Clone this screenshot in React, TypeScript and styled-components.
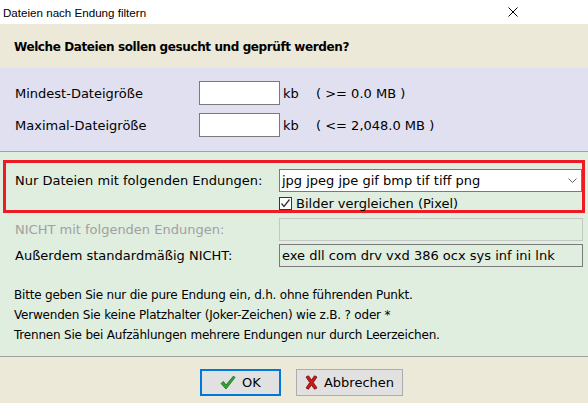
import React from "react";
import styled, { createGlobalStyle } from "styled-components";

const Global = createGlobalStyle`
  html, body { margin: 0; padding: 0; background: #ECE9D8; }
  * { box-sizing: border-box; }
`;

const Window = styled.div`
  width: 588px;
  height: 403px;
  display: flex;
  flex-direction: column;
  background: #ECE9D8;
  font-family: "DejaVu Sans", Verdana, sans-serif;
  font-size: 13px;
  color: #000;
  overflow: hidden;
`;

const TitleBar = styled.div`
  height: 24px;
  flex: none;
  background: #fff;
  display: flex;
  align-items: center;
  justify-content: space-between;
  padding: 0 70px 0 3px;
  font-family: "Liberation Sans", Arial, sans-serif;
  font-size: 11.6px;
`;

const CloseIcon = styled.svg`
  width: 10px;
  height: 10px;
`;

const Header = styled.div`
  height: 44px;
  flex: none;
  display: flex;
  align-items: center;
  padding: 2px 0 0 14px;
  font-weight: bold;
  font-size: 12px;
  letter-spacing: -0.4px;
`;

const SizeSection = styled.section`
  height: 84px;
  flex: none;
  background: #E1E0F0;
  border-bottom: 1px solid #A0A0A0;
  padding: 13px 0 0 15px;
  display: grid;
  grid-template-columns: 184px 81px 36px auto;
  grid-auto-rows: 24px;
  row-gap: 8px;
  align-items: center;
  align-content: start;
`;

const Unit = styled.span`
  padding-left: 3px;
`;

const TextBox = styled.div<{ $disabled?: boolean; $white?: boolean }>`
  height: 100%;
  border: 1px solid ${(p) => (p.$disabled ? "#C4C8C4" : "#7A7A7A")};
  background: ${(p) => (p.$white ? "#fff" : "transparent")};
  display: flex;
  align-items: center;
  padding-left: 2px;
  white-space: nowrap;
`;

const FilterSection = styled.section`
  height: 205px;
  flex: none;
  background: #E0EEE0;
  border-bottom: 1px solid #A0A0A0;
  padding: 8px 3px 0 3px;
  display: flex;
  flex-direction: column;
`;

const Highlight = styled.div`
  border: 3px solid #ED1C24;
  padding: 6px 0 0 9px;
  display: grid;
  grid-template-columns: 264px 1fr;
  grid-template-rows: 23px 13px;
  row-gap: 5px;
  align-items: center;
`;

const Combo = styled(TextBox)`
  justify-content: space-between;
  padding-right: 4px;
`;

const Chevron = styled.svg`
  width: 9px;
  height: 5px;
`;

const CheckRow = styled.label`
  grid-column: 2;
  display: flex;
  align-items: center;
  gap: 4px;
  height: 13px;
`;

const CheckBox = styled.span`
  width: 13px;
  height: 13px;
  border: 1px solid #333;
  background: #fff;
  display: flex;
  align-items: center;
  justify-content: center;
`;

const FieldGrid = styled.div`
  margin-top: 5px;
  padding: 0 2px 0 12px;
  display: grid;
  grid-template-columns: 264px 1fr;
  grid-auto-rows: 23px;
  row-gap: 3px;
  align-items: center;
`;

const Label = styled.span<{ $disabled?: boolean }>`
  color: ${(p) => (p.$disabled ? "#A0A0A0" : "#000")};
  white-space: nowrap;
`;

const Help = styled.div`
  margin-top: 18px;
  padding-left: 11px;
  line-height: 20px;
  font-size: 12px;
  letter-spacing: -0.2px;
  white-space: nowrap;
`;

const Footer = styled.div`
  flex: 1;
  display: flex;
  align-items: flex-start;
  padding: 12px 0 0 200px;
  gap: 15px;
`;

const Button = styled.button<{ $default?: boolean; $w: number }>`
  width: ${(p) => p.$w}px;
  height: 27px;
  margin: 0;
  padding: 0;
  background: #E1E1E1;
  border: ${(p) => (p.$default ? "2px solid #0078D7" : "1px solid #ADADAD")};
  display: flex;
  align-items: center;
  justify-content: center;
  gap: 6px;
  font-family: "DejaVu Sans", Verdana, sans-serif;
  font-size: 13px;
  color: #000;
`;

const Icon = styled.svg`
  flex: none;
`;

export default function App() {
  return (
    <Window>
      <Global />
      <TitleBar>
        <span>Dateien nach Endung filtern</span>
        <CloseIcon viewBox="0 0 10 10">
          <path d="M0.5 0.5 L9.5 9.5 M9.5 0.5 L0.5 9.5" stroke="#000" strokeWidth="1" />
        </CloseIcon>
      </TitleBar>
      <Header>Welche Dateien sollen gesucht und geprüft werden?</Header>
      <SizeSection>
        <span>Mindest-Dateigröße</span>
        <TextBox $white />
        <Unit>kb</Unit>
        <span>( &gt;= 0.0 MB )</span>
        <span>Maximal-Dateigröße</span>
        <TextBox $white />
        <Unit>kb</Unit>
        <span>( &lt;= 2,048.0 MB )</span>
      </SizeSection>
      <FilterSection>
        <Highlight>
          <Label>Nur Dateien mit folgenden Endungen:</Label>
          <Combo $white>
            <span>jpg jpeg jpe gif bmp tif tiff png</span>
            <Chevron viewBox="0 0 9 5">
              <path d="M0.5 0.5 L4.5 4.5 L8.5 0.5" fill="none" stroke="#666" strokeWidth="1" />
            </Chevron>
          </Combo>
          <CheckRow>
            <CheckBox>
              <svg width="11" height="11" viewBox="0 0 11 11">
                <path d="M1.5 5.5 L4 8.5 L9.5 1.5" fill="none" stroke="#333" strokeWidth="1.3" />
              </svg>
            </CheckBox>
            <span>Bilder vergleichen (Pixel)</span>
          </CheckRow>
        </Highlight>
        <FieldGrid>
          <Label $disabled>NICHT mit folgenden Endungen:</Label>
          <TextBox $disabled />
          <Label>Außerdem standardmäßig NICHT:</Label>
          <TextBox>exe dll com drv vxd 386 ocx sys inf ini lnk</TextBox>
        </FieldGrid>
        <Help>
          Bitte geben Sie nur die pure Endung ein, d.h. ohne führenden Punkt.
          <br />
          Verwenden Sie keine Platzhalter (Joker-Zeichen) wie z.B. ? oder *
          <br />
          Trennen Sie bei Aufzählungen mehrere Endungen nur durch Leerzeichen.
        </Help>
      </FilterSection>
      <Footer>
        <Button $default $w={81}>
          <Icon width="16" height="15" viewBox="0 0 16 15">
            <path d="M1 8.5 L3.5 6.5 L6 10 L13.5 1 L15 2.5 L6 14 Z" fill="#2FA52F" stroke="#1C6B1C" strokeWidth="0.8" strokeLinejoin="round" />
          </Icon>
          <span>OK</span>
        </Button>
        <Button $w={107}>
          <Icon width="13" height="15" viewBox="0 0 13 15">
            <path d="M1 2 L3.5 0.8 L6.5 5 L9.5 0.8 L12 2 L8.3 7.5 L12 13 L9.5 14.2 L6.5 10 L3.5 14.2 L1 13 L4.7 7.5 Z" fill="#D01818" stroke="#6A0A0A" strokeWidth="0.8" strokeLinejoin="round" />
          </Icon>
          <span>Abbrechen</span>
        </Button>
      </Footer>
    </Window>
  );
}
